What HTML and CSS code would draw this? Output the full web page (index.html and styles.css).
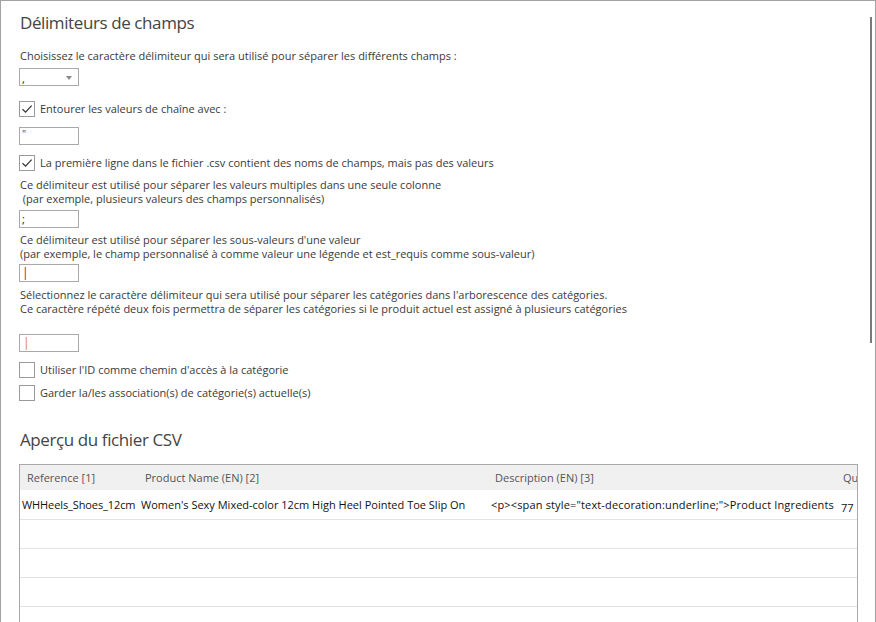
FILE: index.html
```html
<!DOCTYPE html>
<html lang="fr">
<head>
<meta charset="utf-8">
<title>Délimiteurs de champs</title>
<link rel="stylesheet" href="styles.css">
</head>
<body>
<div class="window">
  <div class="scrollbar"></div>
  <div class="content">
    <h1 class="title">Délimiteurs de champs</h1>
    <p class="label l1">Choisissez le caractère délimiteur qui sera utilisé pour séparer les différents champs :</p>
    <div class="combo"><span class="val">,</span><span class="caret"></span></div>
    <div class="check-row r1"><span class="box"><svg viewBox="0 0 16 16" width="16" height="16"><path d="M3.5 8.2 L6.6 11.2 L12.6 4.6" fill="none" stroke="#333" stroke-width="1.2"/></svg></span><span class="label">Entourer les valeurs de chaîne avec :</span></div>
    <div class="input i1"><span class="val quote">"</span></div>
    <div class="check-row r2"><span class="box"><svg viewBox="0 0 16 16" width="16" height="16"><path d="M3.5 8.2 L6.6 11.2 L12.6 4.6" fill="none" stroke="#333" stroke-width="1.2"/></svg></span><span class="label">La première ligne dans le fichier .csv contient des noms de champs, mais pas des valeurs</span></div>
    <p class="label l2">Ce délimiteur est utilisé pour séparer les valeurs multiples dans une seule colonne<br>&nbsp;(par exemple, plusieurs valeurs des champs personnalisés)</p>
    <div class="input i2"><span class="val">;</span></div>
    <p class="label l3">Ce délimiteur est utilisé pour séparer les sous-valeurs d'une valeur<br>(par exemple, le champ personnalisé à comme valeur une légende et est_requis comme sous-valeur)</p>
    <div class="input i3"><span class="val pipe red">|</span></div>
    <p class="label l4">Sélectionnez le caractère délimiteur qui sera utilisé pour séparer les catégories dans l'arborescence des catégories.<br>Ce caractère répété deux fois permettra de séparer les catégories si le produit actuel est assigné à plusieurs catégories</p>
    <div class="input i4"><span class="val pipe orange">|</span></div>
    <div class="check-row r3"><span class="box"></span><span class="label">Utiliser l'ID comme chemin d'accès à la catégorie</span></div>
    <div class="check-row r4"><span class="box"></span><span class="label">Garder la/les association(s) de catégorie(s) actuelle(s)</span></div>
    <h2 class="title t2">Aperçu du fichier CSV</h2>
    <div class="table">
      <div class="row head">
        <span class="c c1">Reference [1]</span>
        <span class="c c2">Product Name (EN) [2]</span>
        <span class="c c3">Description (EN) [3]</span>
        <span class="c c4">Qu</span>
      </div>
      <div class="row data">
        <span class="c c1">WHHeels_Shoes_12cm</span>
        <span class="c c2">Women's Sexy Mixed-color 12cm High Heel Pointed Toe Slip On</span>
        <span class="c c3">&lt;p&gt;&lt;span style="text-decoration:underline;"&gt;Product Ingredients</span>
        <span class="c c4 low">77</span>
      </div>
      <div class="row empty"></div>
      <div class="row empty"></div>
      <div class="row empty"></div>
      <div class="row empty"></div>
    </div>
  </div>
</div>
</body>
</html>
```
FILE: styles.css
```css
html, body {
  margin: 0;
  padding: 0;
  background: #ffffff;
}
body {
  font-family: "Open Sans", "Noto Sans", "Liberation Sans", sans-serif;
  font-size: 11px;
  color: #333333;
}
.window {
  position: relative;
  width: 874px;
  height: 640px;
  border: 1px solid #a3a3a3;
  border-bottom: none;
  overflow: hidden;
}
.scrollbar {
  position: absolute;
  left: 869px;
  top: 16px;
  width: 2px;
  height: 326px;
  background: #7a7a7a;
}
.content {
  padding: 10px 0 0 18px;
}
.title {
  margin: 0;
  font-size: 17px;
  font-weight: 400;
  letter-spacing: -0.4px;
  line-height: 24px;
  color: #444444;
  height: 24px;
  padding-left: 1px;
}
.label {
  margin: 0;
  line-height: 14px;
  color: #3a3a3a;
}
p.label {
  padding-left: 1px;
}
.l1 { margin-top: 14px; }
.combo, .input {
  position: relative;
  box-sizing: border-box;
  width: 60px;
  height: 18px;
  border: 1px solid #a9a9a9;
  background: #fff;
}
.combo { margin-top: 5px; }
.val {
  display: block;
  padding-left: 2px;
  line-height: 16px;
  font-size: 11px;
  color: #222;
}
.combo .val { padding-top: 2px; }
.caret {
  position: absolute;
  right: 6px;
  top: 7px;
  width: 0;
  height: 0;
  border-left: 3.5px solid transparent;
  border-right: 3.5px solid transparent;
  border-top: 4px solid #8a8a8a;
}
.quote { color: #34487a; font-size: 10px; line-height: 12px; }
.pipe { font-size: 12px; }
.red { color: #8b1a3a; }
.orange { color: #e07a2a; padding-left: 3px; }
.check-row {
  display: flex;
  align-items: center;
  height: 16px;
}
.box {
  box-sizing: border-box;
  width: 16px;
  height: 16px;
  border: 1px solid #9a9a9a;
  background: #fff;
  margin-right: 5px;
  flex: none;
  position: relative;
}
.box svg {
  position: absolute;
  left: -1px;
  top: -1px;
}
.r1 { margin-top: 15px; }
.i1 { margin-top: 10px; }
.r2 { margin-top: 10px; }
.l2 { margin-top: 7px; }
.i2 { margin-top: 4px; }
.l3 { margin-top: 5px; line-height: 13.5px; }
.i3 { margin-top: 4px; }
.l4 { margin-top: 6px; line-height: 13.5px; }
.i4 { margin-top: 19px; }
.r3 { margin-top: 10px; }
.r4 { margin-top: 7px; }
.t2 { margin-top: 27px; }
.table {
  margin-top: 12px;
  width: 839px;
  box-sizing: border-box;
  border: 1px solid #a9a9a9;
  border-bottom: none;
  font-size: 11px;
}
.row {
  display: flex;
  height: 29px;
  align-items: center;
  border-bottom: 1px solid #e3e3e3;
  white-space: nowrap;
  overflow: hidden;
}
.row.head {
  height: 25px;
  background: #f0f0f0;
  border-bottom: none;
  color: #555555;
}
.row.empty { height: 28px; }
.c {
  flex: none;
  overflow: hidden;
}
.head .c1 { width: 118px; padding-left: 7px; }
.head .c2 { width: 350px; }
.head .c3 { width: 348px; }
.data { color: #111111; }
.data .c1 { width: 119px; padding-left: 2px; letter-spacing: -0.1px; }
.data .c2 { width: 350px; }
.data .c3 { width: 350px; letter-spacing: 0.15px; }
.low { margin-top: 6px; }
```
